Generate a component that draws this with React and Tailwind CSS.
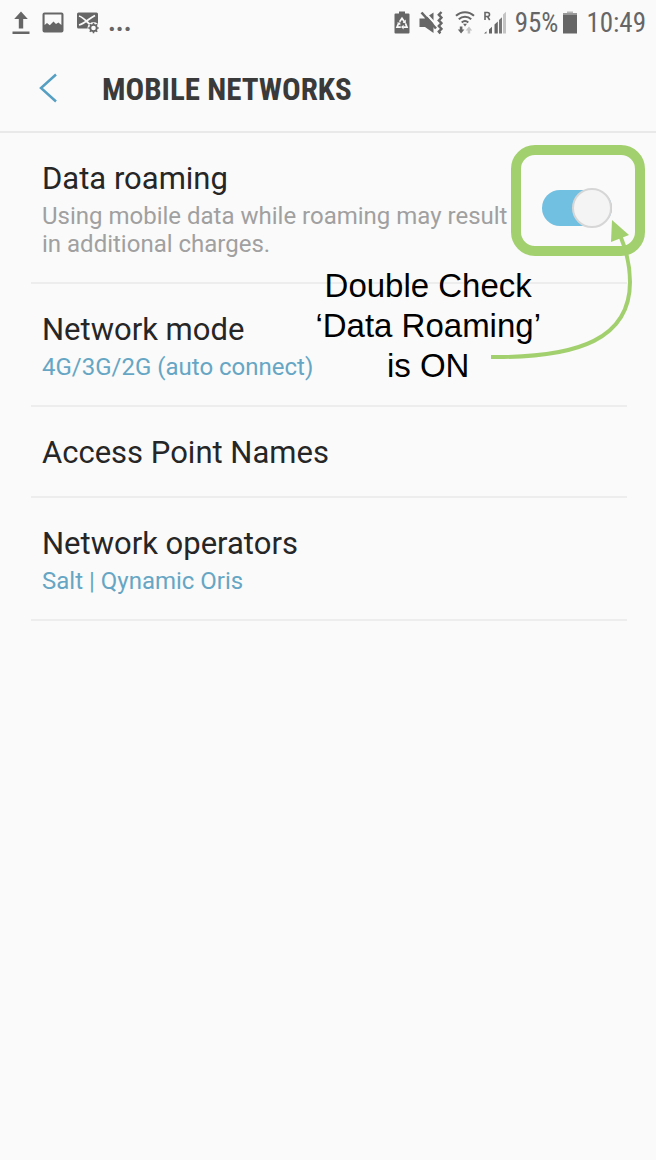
import React, { useState } from "react";
import { clsx } from "clsx";

// Status bar glyphs, all drawn on a 24px grid and tinted through currentColor.
function UploadIcon() {
  return (
    <svg viewBox="0 0 18 24" className="h-6 w-[18px]" fill="currentColor" aria-hidden="true">
      <path d="M9 0.5l6.8 7.5h-4.6v9.5H6.8V8H2.2z" />
      <path d="M0.5 20.5h17v2.5H0.5z" />
    </svg>
  );
}

function PictureIcon() {
  return (
    <svg viewBox="0 0 22 24" className="h-6 w-[22px]" fill="currentColor" aria-hidden="true">
      <path
        fillRule="evenodd"
        d="M2.5 1.5h17a2 2 0 0 1 2 2v16a2 2 0 0 1-2 2h-17a2 2 0 0 1-2-2v-16a2 2 0 0 1 2-2zM2.6 3.6v10.4l2.4-2 2.8 2.2 3.7-3.7 2.5 2.5 2.4-1.5 3 2.5V3.6z"
      />
    </svg>
  );
}

function MailErrorIcon() {
  return (
    <svg viewBox="0 0 24 24" className="h-6 w-6" fill="none" aria-hidden="true">
      <rect x="1" y="1.5" width="21" height="16" rx="1.5" fill="currentColor" />
      <path d="M3 5c4 1 8 6 11 8.5M3 14c6-1.5 9-6 16-9.5" stroke="#fafafa" strokeWidth="1.8" />
      <circle cx="17.5" cy="17" r="6" fill="#fafafa" />
      <circle cx="17.5" cy="17" r="3.2" stroke="currentColor" strokeWidth="1.8" />
      <path
        d="M17.5 11.8v2M17.5 20.2v2M12.3 17h2M20.7 17h2M13.8 13.3l1.4 1.4M19.8 19.3l1.4 1.4M21.2 13.3l-1.4 1.4M15.2 19.3l-1.4 1.4"
        stroke="currentColor"
        strokeWidth="1.6"
      />
    </svg>
  );
}

function BatterySaverIcon() {
  return (
    <svg viewBox="0 0 16 24" className="h-6 w-4" fill="none" aria-hidden="true">
      <path d="M5 0.5h6v2h3.5a1 1 0 0 1 1 1v18a1 1 0 0 1-1 1h-13a1 1 0 0 1-1-1v-18a1 1 0 0 1 1-1H5z" fill="currentColor" />
      <g stroke="#fafafa" strokeWidth="1.7">
        <path d="M5.6 10.8L8 7.2l2.4 3.6" />
        <path d="M4.6 12.2l-1.6 4h3.8M11.4 12.2l1.6 4H9.2" />
      </g>
      <path d="M11.8 8.5v3.5H8.6zM3 11.5h3.3v3zM9.6 13.8v4.6l-2.6-2.3z" fill="#fafafa" />
    </svg>
  );
}

function MuteVibrateIcon() {
  return (
    <svg viewBox="0 0 24 24" className="h-6 w-6" fill="none" aria-hidden="true">
      <path d="M0.5 7.5h5L14.5 1.5v20.5L6 16H0.5z" fill="currentColor" />
      <path d="M5 0.5L16.5 13" stroke="#fafafa" strokeWidth="2.2" />
      <path d="M2.5 1.5L17 17.5" stroke="currentColor" strokeWidth="2.6" />
      <path
        d="M22.5 1l-2.7 2.8 2.7 2.8-2.7 2.8 2.7 2.8-2.7 2.8 2.7 2.8-2.7 2.8 1.6 1.8"
        stroke="currentColor"
        strokeWidth="2.4"
      />
    </svg>
  );
}

function WifiIcon() {
  return (
    <svg viewBox="0 0 20 24" className="h-6 w-5" fill="none" aria-hidden="true">
      <g stroke="currentColor" strokeWidth="2">
        <path d="M1 4.8a13 13 0 0 1 18 0" />
        <path d="M3.8 8.3a9 9 0 0 1 12.4 0" />
        <path d="M6.7 11.5a5 5 0 0 1 6.6 0" />
      </g>
      <path d="M8 12.8h4l-2 2.6z" fill="currentColor" />
      <path d="M4.8 15.5h2.6v3h2L6.1 22.5 2.8 18.5h2z" fill="currentColor" />
      <path d="M14 15.5l3.2 4h-2v3h-2.5v-3h-2z" fill="#c4c4c4" />
    </svg>
  );
}

function SignalIcon() {
  return (
    <svg viewBox="0 0 24 24" className="h-6 w-6" fill="none" aria-hidden="true">
      <path d="M2 9V1.5h2.5a2 2 0 0 1 0 4H2M4.5 5.5L6.7 9" stroke="currentColor" strokeWidth="1.6" />
      <path d="M1 22.5l2.5-2.3v2.3zM6 18.5l3-2.7v6.7H6zM11.5 13.5l3.3-3v12h-3.3z" fill="currentColor" />
      <path d="M16 9l3-2.8v16.3h-3z" fill="#777777" />
      <path d="M20 3.5L23 0.8v21.7h-3z" fill="#c4c4c4" />
    </svg>
  );
}

function BatteryIcon() {
  return (
    <svg viewBox="0 0 16 24" className="h-6 w-4" aria-hidden="true">
      <path d="M5 0.5h6v1.5H5z" fill="#b5b5b5" />
      <path d="M1 2h14v1.5H1z" fill="#9a9a9a" />
      <path d="M1 3.5h14v19H1z" fill="currentColor" />
    </svg>
  );
}

function StatusBar() {
  return (
    <div className="flex h-[45px] items-center justify-between pr-[10px] pl-3 font-['Roboto_Condensed',Roboto,sans-serif] text-[27px] leading-none text-[#666666]">
      <div className="flex items-center gap-3">
        <UploadIcon />
        <PictureIcon />
        <MailErrorIcon />
        <span className="-ml-1 font-bold">...</span>
      </div>
      <div className="flex items-center gap-2">
        <span className="flex items-center gap-[9px] pr-1">
          <BatterySaverIcon />
          <MuteVibrateIcon />
        </span>
        <span className="flex items-center gap-2">
          <WifiIcon />
          <SignalIcon />
        </span>
        <span className="flex items-center gap-1">
          <span className="pt-0.5">95%</span>
          <BatteryIcon />
        </span>
        <span className="pt-0.5">10:49</span>
      </div>
    </div>
  );
}

function Header({ title }) {
  return (
    <header className="flex h-[88px] items-center border-b-2 border-[#e9e9e9] pl-[38px]">
      <button type="button" aria-label="Back" className="mr-11 text-[#559fc2]">
        <svg viewBox="0 0 20 30" className="block h-[30px] w-5" fill="none" stroke="currentColor" strokeWidth="2.5">
          <path d="M18 1.5L3 15l15 13.5" />
        </svg>
      </button>
      <h1 className="pt-1 font-['Roboto_Condensed',Roboto,sans-serif] text-[31px] font-bold text-[#3a3a3a]">
        {title}
      </h1>
    </header>
  );
}

// Switch with the green frame drawn around it.
function HighlightedSwitch({ id, checked, onChange }) {
  return (
    <span className="relative mr-[15px] flex h-10 w-[70px] shrink-0 items-center">
      <input
        id={id}
        type="checkbox"
        role="switch"
        checked={checked}
        onChange={(e) => onChange(e.target.checked)}
        className="h-9 w-full cursor-pointer appearance-none rounded-full bg-[#c4c4c4] checked:bg-[#71bfe1]"
      />
      <span
        className={clsx(
          "pointer-events-none absolute top-0 size-10 rounded-full border-2 border-[#d6d6d6] bg-[#f4f4f4]",
          checked ? "right-0" : "left-0",
        )}
      />
      <span className="pointer-events-none absolute -top-[43px] -right-[33px] -bottom-7 -left-[31px] rounded-3xl border-10 border-[#a3d06e]" />
    </span>
  );
}

function Callout() {
  return (
    <>
      <p className="pointer-events-none absolute top-[133px] right-[86px] z-10 text-center font-['Liberation_Sans',Arial,sans-serif] text-[33px] leading-10 whitespace-nowrap text-black">
        Double Check
        <br />
        ‘Data Roaming’
        <br />
        is ON
      </p>
      <svg
        viewBox="0 0 160 150"
        className="pointer-events-none absolute top-[82px] -right-[13px] z-10 h-[150px] w-40"
        fill="none"
        aria-hidden="true"
      >
        <path d="M11 142C100 143 150 123 150 67C150 50 145 32 140 20" stroke="#a3d06e" strokeWidth="4" />
        <path d="M132 5l17 15-18 7z" fill="#a3d06e" />
      </svg>
    </>
  );
}

function SettingRow({ title, detail, muted, htmlFor, children }) {
  const Text = htmlFor ? "label" : "button";
  return (
    <li className="relative flex items-center border-b-2 border-[#ededed]">
      <Text
        {...(htmlFor ? { htmlFor } : { type: "button" })}
        className="block min-w-0 flex-1 pt-[26px] pr-5 pb-6 pl-[11px] text-left"
      >
        <span className="block text-[31px] leading-[39px] text-[#262626]">{title}</span>
        {detail && (
          <span
            className={clsx(
              "mt-1 block text-2xl leading-7",
              muted ? "text-[#a0a0a0]" : "text-[#66a6c4]",
            )}
          >
            {detail}
          </span>
        )}
      </Text>
      {children}
    </li>
  );
}

export default function App() {
  const [roaming, setRoaming] = useState(true);

  return (
    <div className="min-h-screen overflow-x-hidden bg-[#fafafa] font-[Roboto,sans-serif]">
      <StatusBar />
      <Header title="MOBILE NETWORKS" />
      <main>
        <ul className="mr-[29px] ml-[31px]">
          <SettingRow
            title="Data roaming"
            detail="Using mobile data while roaming may result in additional charges."
            muted
            htmlFor="data-roaming"
          >
            <HighlightedSwitch id="data-roaming" checked={roaming} onChange={setRoaming} />
            <Callout />
          </SettingRow>
          <SettingRow title="Network mode" detail="4G/3G/2G (auto connect)" />
          <SettingRow title="Access Point Names" />
          <SettingRow title="Network operators" detail="Salt | Qynamic Oris" />
        </ul>
      </main>
    </div>
  );
}
